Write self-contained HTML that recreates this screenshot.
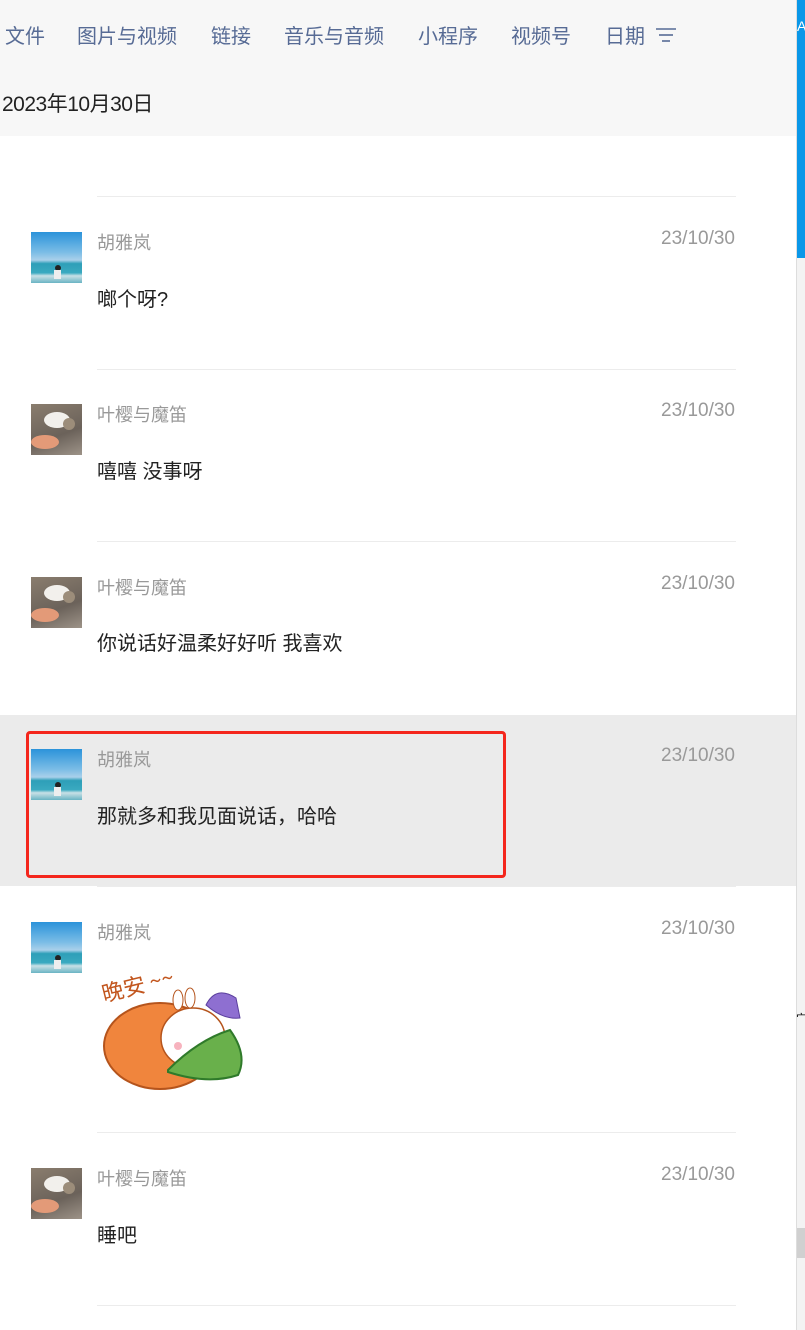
<!DOCTYPE html>
<html><head><meta charset="utf-8">
<style>
*{margin:0;padding:0;box-sizing:border-box}
body{width:805px;height:1330px;overflow:hidden;background:#fff;font-family:"Liberation Sans","Microsoft YaHei","Noto Sans CJK SC",sans-serif;position:relative}
.top{position:absolute;left:0;top:0;width:796px;height:136px;background:#f7f7f7}
.tabs{position:absolute;top:20px;left:5px;font-size:20px;color:#576b95;white-space:nowrap}
.tabs span{position:absolute;top:0}
.date{position:absolute;left:2px;top:88px;font-size:21px;color:#222;letter-spacing:-0.5px}
.sb{position:absolute;left:796px;top:0;width:9px;height:1330px;background:#f3f3f3;border-left:1px solid #ddd}
.sep{position:absolute;left:97px;width:639px;height:1px;background:#ececec}
.row{position:absolute;left:0;width:796px}
.av{position:absolute;left:31px;width:51px;height:51px;overflow:hidden}
.sea{background:linear-gradient(#2b93da 0%,#7bbde6 40%,#a9d0ea 55%,#2e9fb8 62%,#3aa9c0 80%,#c9e0e6 86%,#6ab4c4 100%)}
.cat{background:linear-gradient(160deg,#8a7d6e,#6b625a 60%,#9d9388)}
.name{position:absolute;left:97px;font-size:18px;color:#999}
.time{position:absolute;right:70px;font-size:19px;color:#999}
.msg{position:absolute;left:97px;font-size:20px;color:#222}
</style></head><body>
<div class="top">
 <div class="tabs">
  <span style="left:0">文件</span>
  <span style="left:72px">图片与视频</span>
  <span style="left:206px">链接</span>
  <span style="left:279px">音乐与音频</span>
  <span style="left:413px">小程序</span>
  <span style="left:506px">视频号</span>
  <span style="left:600px">日期</span>
 </div>
 <svg style="position:absolute;left:655px;top:27px" width="22" height="16"><g stroke="#576b95" stroke-width="1.6"><line x1="1" y1="2" x2="21" y2="2"/><line x1="4" y1="8" x2="18" y2="8"/><line x1="7" y1="14" x2="15" y2="14"/></g></svg>
 <div class="date">2023年10月30日</div>
</div>
<div class="sb"><div style="position:absolute;left:0;top:0;width:9px;height:258px;background:#0a97e8"></div><div style="position:absolute;left:0;top:18px;color:#fff;font-size:14px">A</div><div style="position:absolute;left:0;top:1228px;width:9px;height:30px;background:#d0d0d0"></div><div style="position:absolute;left:-1px;top:1010px;font-size:11px;color:#000">宀</div></div>

<div class="sep" style="top:196px"></div>
<div class="sep" style="top:369px"></div>
<div class="sep" style="top:541px"></div>
<div class="row" style="top:715px;height:171px;background:#ebebeb"></div>
<div class="sep" style="top:886px"></div>
<div class="sep" style="top:1132px"></div>
<div class="sep" style="top:1305px"></div>

<div class="av sea" style="top:232px"><svg width="51" height="51"><circle cx="27" cy="36" r="3" fill="#222"/><rect x="23" y="38" width="7" height="9" fill="#eee"/></svg></div>
<div class="name" style="top:229px">胡雅岚</div><div class="time" style="top:228px">23/10/30</div>
<div class="msg" style="top:283px">啷个呀?</div>

<div class="av cat" style="top:404px"><svg width="51" height="51"><ellipse cx="26" cy="16" rx="13" ry="8" fill="#f2f0ec"/><circle cx="38" cy="20" r="6" fill="#9c8d7a"/><ellipse cx="14" cy="38" rx="14" ry="7" fill="#e39a78"/></svg></div>
<div class="name" style="top:401px">叶樱与魔笛</div><div class="time" style="top:400px">23/10/30</div>
<div class="msg" style="top:455px">嘻嘻 没事呀</div>

<div class="av cat" style="top:577px"><svg width="51" height="51"><ellipse cx="26" cy="16" rx="13" ry="8" fill="#f2f0ec"/><circle cx="38" cy="20" r="6" fill="#9c8d7a"/><ellipse cx="14" cy="38" rx="14" ry="7" fill="#e39a78"/></svg></div>
<div class="name" style="top:574px">叶樱与魔笛</div><div class="time" style="top:573px">23/10/30</div>
<div class="msg" style="top:627px">你说话好温柔好好听 我喜欢</div>

<div class="av sea" style="top:749px"><svg width="51" height="51"><circle cx="27" cy="36" r="3" fill="#222"/><rect x="23" y="38" width="7" height="9" fill="#eee"/></svg></div>
<div class="name" style="top:746px">胡雅岚</div><div class="time" style="top:745px">23/10/30</div>
<div class="msg" style="top:800px">那就多和我见面说话，哈哈</div>
<div style="position:absolute;left:26px;top:731px;width:480px;height:147px;border:3px solid #f4261c;border-radius:4px"></div>

<div class="av sea" style="top:922px"><svg width="51" height="51"><circle cx="27" cy="36" r="3" fill="#222"/><rect x="23" y="38" width="7" height="9" fill="#eee"/></svg></div>
<div class="name" style="top:919px">胡雅岚</div><div class="time" style="top:918px">23/10/30</div>
<svg style="position:absolute;left:98px;top:960px" width="150" height="132">
 <text x="6" y="42" font-size="22" fill="#c2561e" transform="rotate(-14 6 42)" font-family="Noto Sans CJK SC,sans-serif">晚安 ~~</text>
 <ellipse cx="62" cy="86" rx="56" ry="43" fill="#f0853d" stroke="#b5541c" stroke-width="2"/>
 <ellipse cx="95" cy="78" rx="32" ry="30" fill="#fff" stroke="#b5541c" stroke-width="1.5"/>
 <ellipse cx="80" cy="40" rx="5" ry="10" fill="#fff" stroke="#b5541c"/>
 <ellipse cx="92" cy="38" rx="5" ry="10" fill="#fff" stroke="#b5541c"/>
 <path d="M108 45 Q118 25 138 38 L142 58 Q125 60 108 45Z" fill="#8e6fd1" stroke="#5b3f9e"/>
 <circle cx="80" cy="86" r="4" fill="#f7b3be"/><circle cx="110" cy="86" r="4" fill="#f7b3be"/>
 <path d="M70 110 Q100 80 132 70 Q150 95 140 115 Q110 125 70 112Z" fill="#69b04b" stroke="#2f7a2a" stroke-width="2"/>
</svg>

<div class="av cat" style="top:1168px"><svg width="51" height="51"><ellipse cx="26" cy="16" rx="13" ry="8" fill="#f2f0ec"/><circle cx="38" cy="20" r="6" fill="#9c8d7a"/><ellipse cx="14" cy="38" rx="14" ry="7" fill="#e39a78"/></svg></div>
<div class="name" style="top:1165px">叶樱与魔笛</div><div class="time" style="top:1164px">23/10/30</div>
<div class="msg" style="top:1219px">睡吧</div>
</body></html>
